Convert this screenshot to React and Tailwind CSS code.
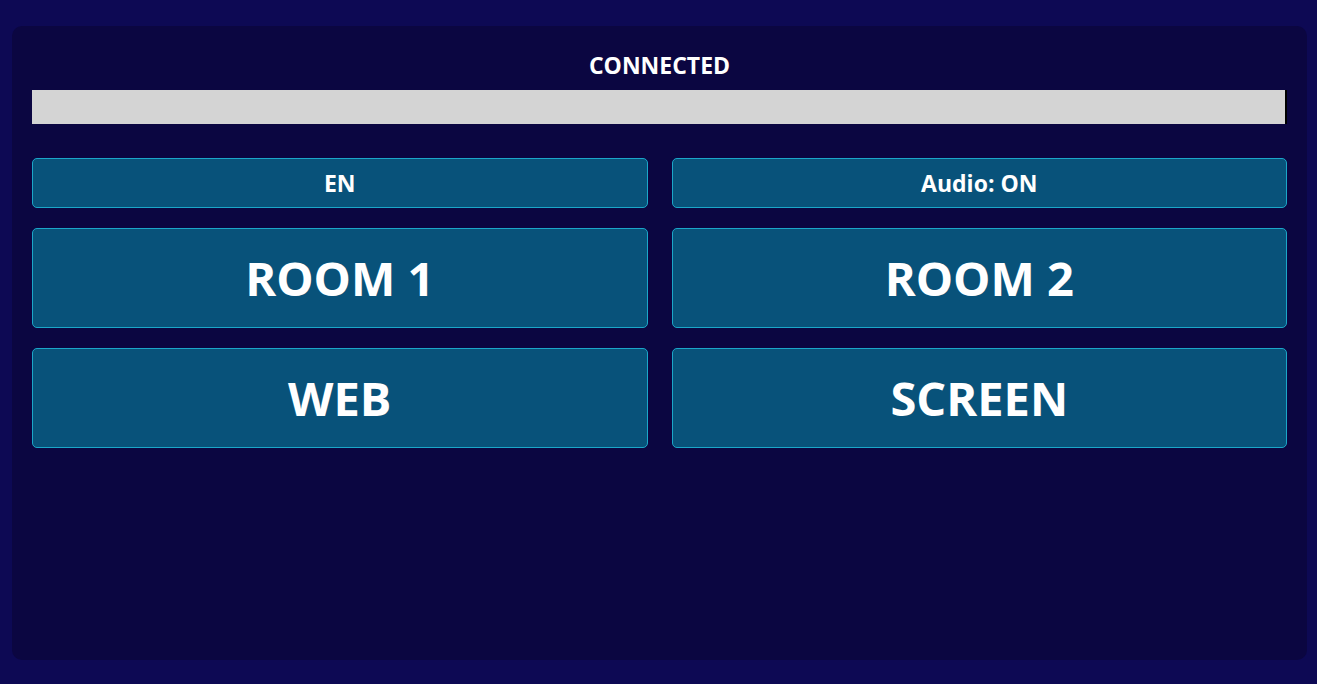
export default function App() {
  const font = { fontFamily: '"Open Sans", "Noto Sans", sans-serif' }
  return (
    <div className="w-[1317px] h-[684px] bg-[#0d0954] pl-[12px] pr-[10px] pt-[26px] pb-[24px]" style={font}>
      <div className="h-full rounded-[10px] bg-[#0b0641] px-[20px] pt-[24px]">
        <div className="text-center text-white font-bold text-[23px] leading-[30px]">CONNECTED</div>
        <div className="mt-[10px] h-[34px] bg-[#d4d4d4] border-r-2 border-black" />
        <div className="mt-[34px] grid grid-cols-2 gap-x-[24px] gap-y-[20px]">
          <Btn small>EN</Btn>
          <Btn small>Audio: ON</Btn>
          <Btn>ROOM 1</Btn>
          <Btn>ROOM 2</Btn>
          <Btn>WEB</Btn>
          <Btn>SCREEN</Btn>
        </div>
      </div>
    </div>
  )
}

function Btn({ small, children }) {
  return (
    <button
      className={`flex items-center justify-center rounded-[5px] border border-[#1ba6c9] bg-[#08527a] text-white font-bold ${
        small ? 'h-[50px] text-[23px]' : 'h-[100px] text-[47px]'
      }`}
    >
      {children}
    </button>
  )
}
